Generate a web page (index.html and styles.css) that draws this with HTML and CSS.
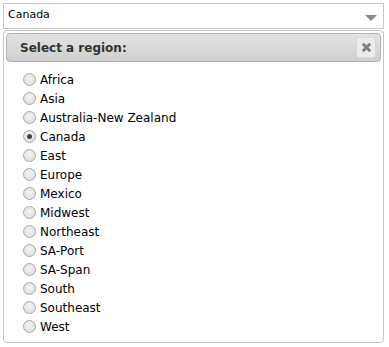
FILE: index.html
```html
<!DOCTYPE html>
<html>
<head>
<meta charset="utf-8">
<link rel="stylesheet" href="styles.css">
</head>
<body>
<div class="select">
  <span class="value">Canada</span>
  <span class="arrow"></span>
</div>
<div class="panel">
  <div class="header">
    <span class="title">Select a region:</span>
    <span class="close">
      <svg width="11" height="11" viewBox="0 0 11 11"><path d="M1.8 1.8 L9.2 9.2 M9.2 1.8 L1.8 9.2" stroke="#808080" stroke-width="3" stroke-linecap="butt"/></svg>
    </span>
  </div>
  <ul class="list">
    <li><span class="radio"></span>Africa</li>
    <li><span class="radio"></span>Asia</li>
    <li><span class="radio"></span>Australia-New Zealand</li>
    <li><span class="radio checked"></span>Canada</li>
    <li><span class="radio"></span>East</li>
    <li><span class="radio"></span>Europe</li>
    <li><span class="radio"></span>Mexico</li>
    <li><span class="radio"></span>Midwest</li>
    <li><span class="radio"></span>Northeast</li>
    <li><span class="radio"></span>SA-Port</li>
    <li><span class="radio"></span>SA-Span</li>
    <li><span class="radio"></span>South</li>
    <li><span class="radio"></span>Southeast</li>
    <li><span class="radio"></span>West</li>
  </ul>
</div>
</body>
</html>
```
FILE: styles.css
```css
html, body { margin: 0; padding: 0; background: #fff; }
body { padding: 3px 5px 0 3px; font-family: "DejaVu Sans", Verdana, sans-serif; color: #000; }
.select {
  height: 24px;
  border: 1px solid #c8c8c8;
  display: flex;
  align-items: center;
  justify-content: space-between;
  padding: 0 6px 0 4px;
  font-family: "DejaVu Sans", Tahoma, sans-serif;
  font-size: 11px;
}
.value { position: relative; top: -2px; }
.arrow {
  width: 0; height: 0;
  border-left: 6px solid transparent;
  border-right: 6px solid transparent;
  border-top: 6px solid #8a8a8a;
  margin-top: 4px;
}
.panel {
  margin-top: 1px;
  border: 1px solid #c5c5c5;
  border-radius: 4px;
  padding: 2px;
  height: 313px;
  box-sizing: border-box;
}
.header {
  height: 29px;
  box-sizing: border-box;
  border: 1px solid #b0b0b0;
  border-radius: 4px;
  background: linear-gradient(#e3e3e3, #cfcfcf);
  display: flex;
  align-items: center;
  justify-content: space-between;
  padding: 0 4px 0 13px;
}
.title { font-weight: bold; font-size: 12px; color: #333; }
.close {
  width: 18px; height: 19px;
  border: 1px solid #d8d8d8;
  border-radius: 3px;
  background: #ececec;
  display: flex; align-items: center; justify-content: center;
}
.list { list-style: none; margin: 0; padding: 8px 0 0 17px; }
.list li {
  height: 19px;
  display: flex;
  align-items: center;
  font-size: 12px;
}
.radio {
  width: 11px; height: 11px;
  border-radius: 50%;
  border: 1px solid #a8a8a8;
  background: radial-gradient(circle at 50% 40%, #f4f4f4, #d8d8d8);
  margin-right: 4px;
  flex: none;
  position: relative;
}
.radio.checked::after {
  content: "";
  position: absolute;
  left: 3px; top: 3px;
  width: 5px; height: 5px;
  border-radius: 50%;
  background: #444;
}
```
